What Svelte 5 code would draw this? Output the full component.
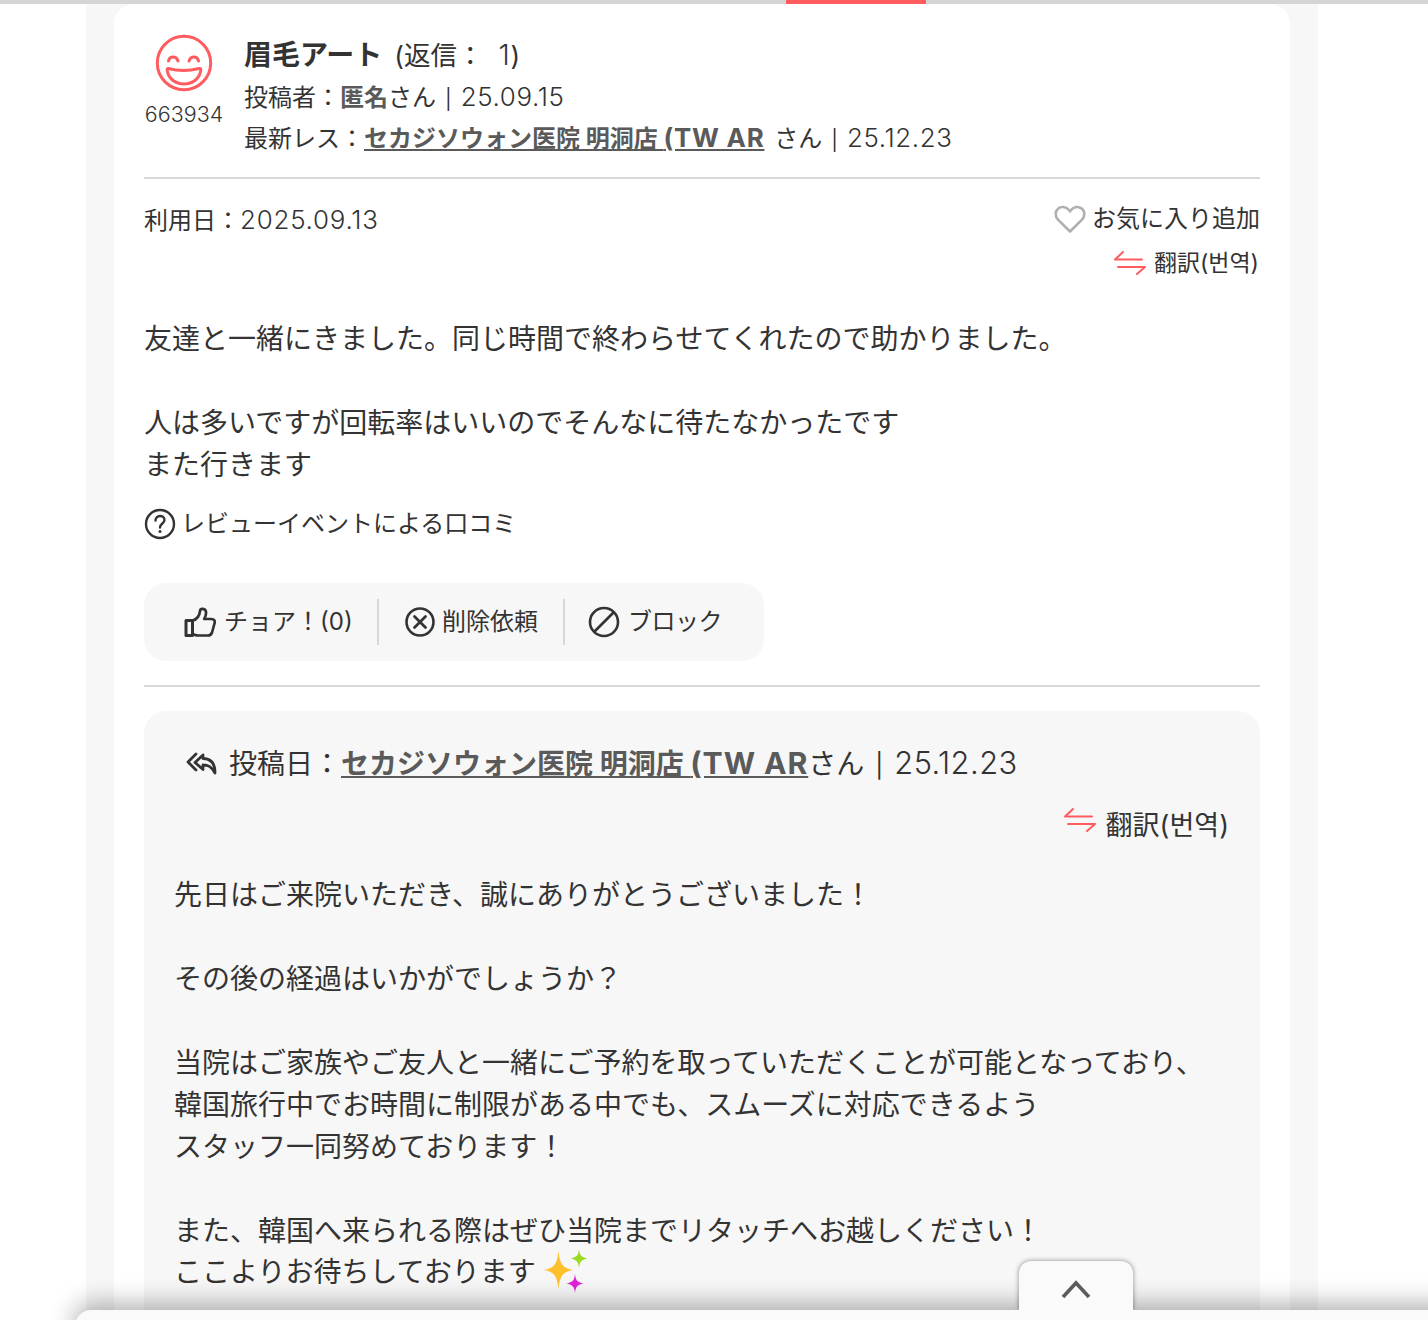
<script>
  const actions = [
    { label: 'チョア！(0)', icon: 'thumb' },
    { label: '削除依頼', icon: 'x' },
    { label: 'ブロック', icon: 'ban' }
  ];
</script>

<div class="page">
  <div class="progress"><div class="progress-fill"></div></div>
  <div class="wrap">
    <article class="card">
      <header class="head">
        <div class="avatar">
          <svg width="58" height="58" viewBox="0 0 58 58" fill="none" stroke="#ff5c60" stroke-width="3">
            <circle cx="29" cy="29" r="26.7" />
            <path d="M13.500 27c1-5.500 8-5.500 9.500 0M34 27c1.500-5.500 8.500-5.500 9.500 0" stroke-linecap="round" />
            <path d="M13 34.500c10 2.500 21 2.500 31 0 1.500-.3 2 .5 1.800 2-1.300 8-8 13.500-16.800 13.500S13.500 44.500 12.200 36.500c-.2-1.500.3-2.300.8-2z" stroke-linejoin="round" />
          </svg>
          <span class="uid">663934</span>
        </div>
        <div class="meta">
          <h2 class="title"><strong>眉毛アート</strong><span class="count">(返信：&nbsp; <span class="num">1</span>)</span></h2>
          <p>投稿者：<b class="name">匿名</b>さん<span class="sep">|</span><span class="num">25.09.15</span></p>
          <p>最新レス：<a class="link" href="#a">セカジソウォン医院 明洞店 <span class="lat">(TW AR</span></a> <span class="after">さん</span><span class="sep">|</span><span class="num">25.12.23</span></p>
        </div>
      </header>

      <div class="info">
        <div class="date">利用日：<span class="num">2025.09.13</span></div>
        <div class="tools">
          <div class="fav">
            <svg width="32" height="30" viewBox="0 0 32 30" fill="none" stroke="#b0b0b0" stroke-width="2.600">
              <path d="M16 27.500 4.200 15.800C.8 12.300 1 7.500 4 4.800c3.200-2.800 8-2.300 10.700 1L16 7.400l1.300-1.600C20 2.500 24.800 2 28 4.800c3 2.700 3.200 7.500-.2 11z" stroke-linejoin="round" />
            </svg>
            <span>お気に入り追加</span>
          </div>
          <div class="trans small">
            <svg width="34" height="26" viewBox="0 0 34 26" fill="none" stroke="#ff5c60" stroke-width="2">
              <path d="M10 2 2 9.500h27M32 17H5M32 17l-8 7" stroke-linecap="round" stroke-linejoin="round" />
            </svg>
            <span>翻訳(번역)</span>
          </div>
        </div>
      </div>

      <div class="body">
        <p>友達と一緒にきました。同じ時間で終わらせてくれたので助かりました。</p>
        <p>&nbsp;</p>
        <p>人は多いですが回転率はいいのでそんなに待たなかったです</p>
        <p>また行きます</p>
      </div>

      <div class="event">
        <svg width="32" height="32" viewBox="0 0 32 32" fill="none" stroke="#333" stroke-width="2.400">
          <circle cx="16" cy="16" r="14" />
          <path d="M11.500 12.500c0-6 9-6 9-.5 0 3.500-4.500 3.500-4.500 7.500" stroke-linecap="round" />
          <circle cx="16" cy="23.500" r="1.500" fill="#333" stroke="none" />
        </svg>
        <span>レビューイベントによる口コミ</span>
      </div>

      <div class="actions">
        {#each actions as a}
          <div class="action {a.icon}">
            {#if a.icon === 'thumb'}
              <svg width="32" height="30" viewBox="0 0 32 30" fill="none" stroke="#333" stroke-width="2.700" stroke-linejoin="round">
                <path d="M2 13.500h6.500v15H2z" stroke-width="3" />
                <path d="M8.500 13.500c4.500-1 7-5 7.500-9.500.3-3 5.500-3 6 1 .3 2.500-.7 5-1.800 7h7.300c3 0 3.800 2.500 3 4.500l-2.500 9c-.7 2-2 3-4 3H14c-2 0-3.500-1-5.500-1.500" />
              </svg>
            {:else if a.icon === 'x'}
              <svg width="30" height="30" viewBox="0 0 30 30" fill="none" stroke="#333" stroke-width="2.600">
                <circle cx="15" cy="15" r="13.500" />
                <path d="m9.500 9.500 11 11M20.500 9.500l-11 11" stroke-width="2.800" stroke-linecap="round" />
              </svg>
            {:else}
              <svg width="32" height="32" viewBox="0 0 32 32" fill="none" stroke="#333" stroke-width="2.600">
                <circle cx="16" cy="16" r="14" />
                <path d="M25.500 6.500 6.500 25.500" />
              </svg>
            {/if}
            <span>{a.label}</span>
          </div>
        {/each}
      </div>

      <div class="reply">
        <div class="reply-head">
          <svg width="32" height="24" viewBox="0 0 32 24" fill="none" stroke="#333" stroke-width="2.800" stroke-linejoin="round" stroke-linecap="round">
            <path d="M10 2 2 10l8 8" />
            <path d="M17 3 9 10.500l8 7v-4.500c5 0 8 1 12 8 0-9-4-14.500-12-14.500z" />
          </svg>
          <span>投稿日：<a class="link" href="#b">セカジソウォン医院 明洞店 <span class="lat">(TW AR</span></a>さん<span class="sep big">|</span><span class="num">25.12.23</span></span>
        </div>
        <div class="trans large">
          <svg width="34" height="26" viewBox="0 0 34 26" fill="none" stroke="#ff5c60" stroke-width="2">
            <path d="M10 2 2 9.500h27M32 17H5M32 17l-8 7" stroke-linecap="round" stroke-linejoin="round" />
          </svg>
          <span>翻訳(번역)</span>
        </div>
        <div class="body reply-body">
          <p>先日はご来院いただき、誠にありがとうございました！</p>
          <p>&nbsp;</p>
          <p>その後の経過はいかがでしょうか？</p>
          <p>&nbsp;</p>
          <p>当院はご家族やご友人と一緒にご予約を取っていただくことが可能となっており、</p>
          <p>韓国旅行中でお時間に制限がある中でも、スムーズに対応できるよう</p>
          <p>スタッフ一同努めております！</p>
          <p>&nbsp;</p>
          <p>また、韓国へ来られる際はぜひ当院までリタッチへお越しください！</p>
          <p class="sparkline">ここよりお待ちしております
            <svg class="sparkles" width="44" height="46" viewBox="0 0 44 46">
              <path d="M14.500 2c1.500 13 4 17 14.500 19-10.500 2-13 6-14.500 19-1.500-13-4-17-14.500-19 10.500-2 13-6 14.500-19z" fill="#ffc02e" />
              <path d="M35 0c.8 6.500 2 8 8.500 9.500C37 11 35.800 12.500 35 19c-.8-6.500-2-8-8.500-9.500C33 8 34.200 6.500 35 0z" fill="#9bd923" />
              <path d="M31 25c.8 6.500 2 8 8.500 9.500-6.500 1.500-7.700 3-8.500 9.500-.8-6.500-2-8-8.500-9.500 6.500-1.500 7.700-3 8.500-9.500z" fill="#e022d8" />
            </svg>
          </p>
        </div>
      </div>
    </article>
  </div>

  <div class="sheet"></div>
  <button class="up" aria-label="上へ">
    <svg width="32" height="20" viewBox="0 0 32 20" fill="none" stroke="#5c5c5c" stroke-width="3.600">
      <path d="M3 18 16 4l13 14" />
    </svg>
  </button>
</div>

<style>
  :global(body) {
    margin: 0;
    background: #fff;
  }
  .page {
    position: relative;
    height: 1320px;
    overflow: hidden;
    font-family: Inter, "Noto Sans CJK JP", sans-serif;
    color: #333;
    font-size: 26px;
    line-height: 42px;
  }
  p, h2 {
    margin: 0;
    font-weight: 400;
  }
  .progress {
    height: 4px;
    background: #d5d5d5;
    padding-left: 786px;
  }
  .progress-fill {
    width: 140px;
    height: 4px;
    background: #ff5c60;
  }
  .wrap {
    width: 1176px;
    margin-left: 86px;
    padding: 0 28px;
    background: #f7f7f7;
    min-height: 1316px;
  }
  .card {
    background: #fff;
    border-radius: 20px 20px 0 0;
    padding: 30px 30px 0;
    height: 1286px;
  }
  .head {
    display: flex;
    height: 143px;
    border-bottom: 2px solid #d8d8d8;
  }
  .avatar {
    width: 80px;
    margin-right: 20px;
    display: flex;
    flex-direction: column;
    align-items: center;
  }
  .uid {
    font-size: 21.500px;
    line-height: 44px;
    font-weight: 300;
  }
  .meta {
    font-size: 24px;
  }
  .meta p {
    height: 41px;
    line-height: 41px;
  }
  .num {
    font-size: 1.080em;
    font-weight: 300;
    letter-spacing: 0.025em;
    line-height: 1;
  }
  .sep {
    font-size: 20px;
    margin: 0 9px;
    line-height: 1;
  }
  .sep.big {
    font-size: 24px;
    margin: 0 11px;
  }
  .after {
    margin-left: 3px;
  }
  .title {
    font-size: 28px;
    height: 43px;
    line-height: 42px;
  }
  .title strong {
    font-weight: 700;
    margin-right: 12px;
  }
  .count {
    font-size: 26.500px;
  }
  .name {
    font-weight: 700;
    color: #5a5a5a;
  }
  .link {
    color: #5a5a5a;
    font-weight: 700;
    text-decoration: underline;
  }
  .lat {
    font-size: 1.080em;
    letter-spacing: 0.03em;
    line-height: 1;
  }
  .info {
    display: flex;
    justify-content: space-between;
    padding-top: 18px;
  }
  .date {
    font-size: 24px;
    padding-top: 3px;
  }
  .date .num {
    letter-spacing: 0.03em;
  }
  .tools {
    display: flex;
    flex-direction: column;
    align-items: flex-end;
  }
  .fav {
    display: flex;
    align-items: center;
    gap: 6px;
    height: 44px;
    font-size: 24px;
  }
  .trans {
    display: flex;
    align-items: center;
    height: 44px;
  }
  .trans.small {
    font-size: 23px;
    gap: 7px;
    padding-right: 1px;
  }
  .body {
    margin-top: 33px;
    font-size: 28px;
    line-height: 42px;
  }
  .event {
    display: flex;
    align-items: center;
    gap: 5px;
    margin-top: 18px;
    height: 40px;
    font-size: 24px;
  }
  .actions {
    display: flex;
    align-items: center;
    width: 620px;
    height: 78px;
    box-sizing: border-box;
    margin-top: 39px;
    padding: 0 0 0 40px;
    background: #f7f7f7;
    border-radius: 22px;
    font-size: 24px;
  }
  .action {
    display: flex;
    align-items: center;
    gap: 8px;
    height: 46px;
  }
  .action.thumb {
    width: 193px;
    border-right: 2px solid #d8d8d8;
  }
  .action.x {
    width: 186px;
    padding-left: 26px;
    box-sizing: border-box;
    border-right: 2px solid #d8d8d8;
    gap: 7px;
  }
  .action.ban {
    padding-left: 23px;
    gap: 8px;
    letter-spacing: -0.5px;
  }
  .reply {
    position: relative;
    margin-top: 50px;
    padding: 30px;
    background: #f7f7f7;
    border-radius: 22px;
    height: 800px;
    box-sizing: border-box;
  }
  .reply::before {
    content: "";
    position: absolute;
    left: 0;
    right: 0;
    top: -26px;
    height: 2px;
    background: #d8d8d8;
  }
  .reply-head {
    display: flex;
    align-items: center;
    gap: 11px;
    padding-left: 12px;
    height: 46px;
    font-size: 28px;
  }
  .reply-head .num {
    letter-spacing: 0.015em;
    font-size: 1.100em;
  }
  .trans.large {
    justify-content: flex-end;
    gap: 9px;
    margin-top: 17px;
    font-size: 27px;
    padding-right: 1px;
  }
  .trans.large svg {
    margin-top: -12px;
  }
  .reply-body {
    margin-top: 26px;
  }
  .sparkline {
    display: flex;
    align-items: center;
    gap: 8px;
    white-space: nowrap;
    height: 40px;
  }
  .sheet {
    position: absolute;
    left: 75px;
    right: -40px;
    top: 1310px;
    height: 40px;
    background: #fafafa;
    border-radius: 16px 16px 0 0;
    box-shadow: 0 -6px 26px rgba(0, 0, 0, 0.32);
  }
  .up {
    position: absolute;
    left: 1019px;
    top: 1261px;
    width: 114px;
    height: 49px;
    padding: 10px 0 0;
    border: 0;
    background: #fafafa;
    border-radius: 12px 12px 0 0;
    box-shadow: 0 0 5px rgba(0, 0, 0, 0.45);
    clip-path: inset(-8px -8px 0 -8px);
  }
</style>
